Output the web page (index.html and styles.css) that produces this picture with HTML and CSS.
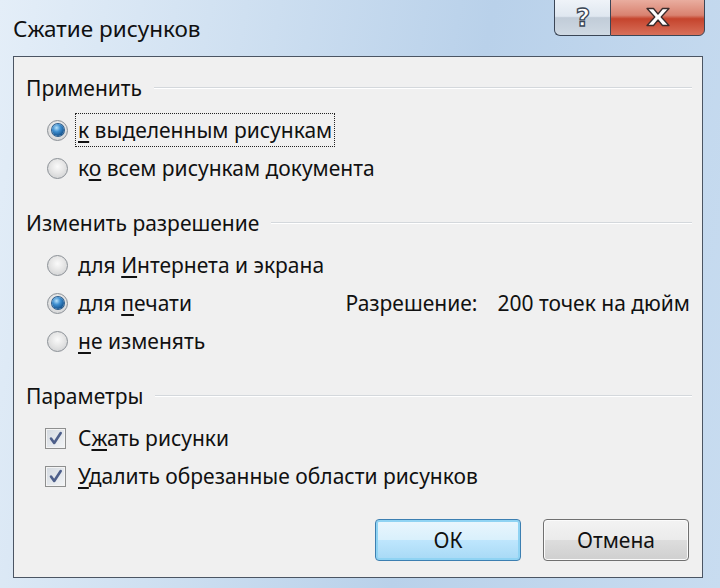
FILE: index.html
```html
<!DOCTYPE html>
<html lang="ru">

<head>
  <meta charset="UTF-8">
  <title>Сжатие рисунков</title>
  <link rel="stylesheet" href="styles.css">
</head>

<body>
  <div class="window">
    <div class="titlebar">
      <span class="title">Сжатие рисунков</span>
      <div class="caption-btns">
        <div class="cap help">
          <svg width="26" height="28" viewBox="0 0 26 28">
            <text x="13" y="23" text-anchor="middle" class="qmark">?</text>
          </svg>
        </div>
        <div class="cap close">
          <svg width="26" height="20" viewBox="0 0 26 20">
            <path d="M2 1.5h6.5l4.5 5.5 4.5-5.5h6.5l-7.8 8.5 7.8 8.5h-6.5l-4.5-5.5-4.5 5.5h-6.5l7.8-8.5z" fill="#fff" stroke="#3a2b2b" stroke-width="1.3" stroke-linejoin="round" />
          </svg>
        </div>
      </div>
    </div>

    <div class="client">
      <div class="section">
        <div class="group-head"><span>Применить</span><i class="rule"></i></div>
        <div class="opts">
          <div class="opt"><span class="radio on"></span><span class="focus"><u>к</u> выделенным рисункам</span></div>
          <div class="opt"><span class="radio"></span><span>к<u>о</u> всем рисункам документа</span></div>
        </div>
      </div>

      <div class="section">
        <div class="group-head"><span>Изменить разрешение</span><i class="rule"></i></div>
        <div class="opts">
          <div class="opt"><span class="radio"></span><span>для <u>И</u>нтернета и экрана</span></div>
          <div class="opt">
            <span class="radio on"></span><span>для <u>п</u>ечати</span>
            <div class="res"><span>Разрешение:</span><span>200 точек на дюйм</span></div>
          </div>
          <div class="opt"><span class="radio"></span><span><u>н</u>е изменять</span></div>
        </div>
      </div>

      <div class="section">
        <div class="group-head"><span>Параметры</span><i class="rule"></i></div>
        <div class="opts">
          <div class="opt">
            <span class="check"><svg width="18" height="18" viewBox="0 0 18 18"><path d="M4 9.5l3.2 4.5 6.5-10" /></svg></span>
            <span>С<u>ж</u>ать рисунки</span>
          </div>
          <div class="opt">
            <span class="check"><svg width="18" height="18" viewBox="0 0 18 18"><path d="M4 9.5l3.2 4.5 6.5-10" /></svg></span>
            <span><u>У</u>далить обрезанные области рисунков</span>
          </div>
        </div>
      </div>

      <div class="actions">
        <button class="btn default">ОК</button>
        <button class="btn">Отмена</button>
      </div>
    </div>
  </div>
</body>

</html>
```

FILE: styles.css
```css
* {
  margin: 0;
  padding: 0;
  box-sizing: border-box;
}

html,
body {
  width: 720px;
  height: 588px;
  overflow: hidden;
}

body {
  font-family: "Noto Sans", "Open Sans", sans-serif;
  font-size: 21px;
  color: #111;
}

u {
  text-underline-offset: 3px;
}

.window {
  width: 720px;
  height: 588px;
  display: flex;
  flex-direction: column;
  background: linear-gradient(100deg, #e4eef8 0%, #cfe0f1 30%, #b9d1ea 60%, #c8dcf0 100%);
}

/* заголовок окна */
.titlebar {
  height: 56px;
  display: flex;
  justify-content: space-between;
  align-items: flex-start;
}

.title {
  font-size: 22.5px;
  padding: 13px 0 0 13px;
  color: #101010;
}

.caption-btns {
  display: flex;
  margin-right: 15px;
  margin-top: -2px;
}

.cap {
  height: 38px;
  border: 1px solid #3b4656;
  display: flex;
  align-items: center;
  justify-content: center;
}

.help {
  width: 56px;
  border-right: none;
  border-radius: 0 0 0 6px;
  background: linear-gradient(#f0f4f9 0%, #dfe7f0 48%, #c1ccd8 52%, #cfd9e3 100%);
}

.close {
  width: 95px;
  border-radius: 0 0 6px 0;
  background: linear-gradient(#eab0a2 0%, #d98270 45%, #c5442d 55%, #d8705a 100%);
}

.qmark {
  font-family: "DejaVu Sans", sans-serif;
  font-weight: bold;
  font-size: 25px;
  fill: #fff;
  stroke: #3b4656;
  stroke-width: 1.3;
}

/* рабочая область */
.client {
  flex: 1;
  margin: 0 17px 10px 13px;
  border: 1px solid #4b5563;
  background: #f0f0f0;
  padding: 15px 10px 0 12px;
  display: flex;
  flex-direction: column;
}

.section + .section {
  margin-top: 20px;
}

.group-head {
  height: 32px;
  display: flex;
  align-items: center;
  gap: 12px;
}

.rule {
  flex: 1;
  height: 2px;
  border-top: 1px solid #d4d8dc;
  border-bottom: 1px solid #fff;
}

.opts {
  margin-top: 7px;
  padding-left: 21px;
}

.opt {
  height: 38px;
  display: flex;
  align-items: center;
}

.radio {
  width: 21px;
  height: 21px;
  margin-right: 10px;
  border-radius: 50%;
  border: 1px solid #8b9096;
  background: radial-gradient(circle at 50% 40%, #fafafa 0%, #e6e6e6 45%, #c9cbcd 100%);
  display: flex;
  align-items: center;
  justify-content: center;
}

.radio.on::after {
  content: "";
  width: 12px;
  height: 12px;
  border-radius: 50%;
  background: radial-gradient(circle at 38% 32%, #b7e2fb 0%, #3f8fd0 35%, #195a96 70%, #0f3c6b 100%);
  box-shadow: 0 0 0 1px #2a5c8c;
}

.focus {
  border: 1px dotted #222;
  padding: 2px 2px;
  margin-left: -3px;
}

.res {
  margin-left: auto;
  display: flex;
  gap: 20px;
  padding-right: 2px;
}

.check {
  width: 21px;
  height: 21px;
  margin: 0 12px 0 -2px;
  border: 1px solid #8e8f8f;
  background: linear-gradient(135deg, #d3d9e0, #f3f5f7);
  box-shadow: inset 0 0 0 1px #f4f4f4;
  display: flex;
  align-items: center;
  justify-content: center;
}

.check path {
  fill: none;
  stroke: #4d5f8a;
  stroke-width: 2.6;
  stroke-linecap: round;
  stroke-linejoin: round;
}

/* кнопки */
.actions {
  margin-top: 24px;
  display: flex;
  justify-content: flex-end;
  gap: 22px;
  padding-right: 3px;
}

.btn {
  width: 146px;
  height: 42px;
  font: inherit;
  color: #111;
  border-radius: 4px;
  border: 1px solid #707070;
  background: linear-gradient(#f3f3f3 0%, #ebebeb 49%, #dddddd 51%, #cfcfcf 100%);
  box-shadow: inset 0 0 0 1px #fbfbfb;
}

.btn.default {
  border-color: #3c7fb1;
  background: linear-gradient(#eaf6fd 0%, #d9f0fc 49%, #bee6fd 51%, #a7d9f5 100%);
  box-shadow: inset 0 0 0 2px #8fd3f3;
}
```
